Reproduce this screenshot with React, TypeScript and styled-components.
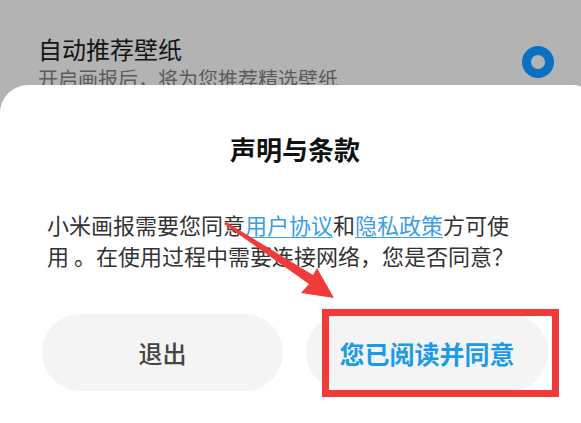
import React from 'react'
import styled, { createGlobalStyle } from 'styled-components'

const GlobalStyle = createGlobalStyle`
  html, body {
    margin: 0;
    padding: 0;
    background: #ffffff;
  }
  body {
    font-family: 'Noto Sans CJK SC', 'Noto Sans', sans-serif;
  }
`

const Screen = styled.main`
  position: relative;
  width: 581px;
  height: 423px;
  overflow: hidden;
  background: #b3b3b3;
`

const SettingRow = styled.section`
  display: flex;
  align-items: flex-start;
  justify-content: space-between;
  height: 85px;
  padding: 0 27px 0 38px;
  box-sizing: border-box;
  overflow: hidden;
`

const SettingText = styled.div`
  display: flex;
  flex-direction: column;
  padding-top: 33px;
`

const SettingTitle = styled.h2`
  margin: 0;
  font-size: 24px;
  line-height: 32px;
  font-weight: 400;
  color: #141414;
`

const SettingDesc = styled.p`
  margin: 0;
  font-size: 20px;
  line-height: 28px;
  color: #5c5c5c;
`

const Toggle = styled.span`
  width: 32px;
  height: 32px;
  margin-top: 46px;
  box-sizing: border-box;
  border: 9px solid #0a71c2;
  border-radius: 50%;
`

const Sheet = styled.section`
  width: 600px;
  height: 338px;
  padding: 46px 0 0 42px;
  box-sizing: border-box;
  background: #ffffff;
  border-radius: 28px 28px 0 0;
`

const Content = styled.div`
  width: 506px;
  display: flex;
  flex-direction: column;
`

const Title = styled.h1`
  margin: 0;
  text-align: center;
  font-size: 26px;
  line-height: 36px;
  font-weight: 700;
  color: #111111;
`

const Body = styled.p`
  margin: 42px 0 0;
  padding: 0 30px 0 5px;
  font-size: 22px;
  line-height: 31px;
  color: #333333;
`

const Link = styled.a`
  color: #3b9ee3;
  text-decoration: underline;
  text-underline-offset: 3px;
  text-decoration-thickness: 1px;
`

const Actions = styled.div`
  display: grid;
  grid-template-columns: 241px 242px;
  gap: 23px;
  margin-top: 43px;
`

const Pill = styled.button<{ $primary?: boolean }>`
  height: 77px;
  border: none;
  border-radius: 39px;
  background: #f4f4f4;
  font-family: inherit;
  font-size: ${p => (p.$primary ? '25px' : '24px')};
  font-weight: ${p => (p.$primary ? 700 : 500)};
  color: ${p => (p.$primary ? '#1b9ae6' : '#444444')};
  padding: 0;
`

const Highlight = styled.div`
  position: relative;
`

const RedBox = styled.span`
  position: absolute;
  left: 16px;
  right: -11px;
  top: -5px;
  bottom: -6px;
  border: 7px solid #f23a3a;
  pointer-events: none;
`

const ArrowLayer = styled.svg`
  position: absolute;
  left: 0;
  top: 0;
  pointer-events: none;
`

export default function App() {
  return (
    <>
      <GlobalStyle />
      <Screen>
        <SettingRow>
          <SettingText>
            <SettingTitle>自动推荐壁纸</SettingTitle>
            <SettingDesc>开启画报后，将为您推荐精选壁纸</SettingDesc>
          </SettingText>
          <Toggle />
        </SettingRow>
        <Sheet>
          <Content>
            <Title>声明与条款</Title>
            <Body>
              小米画报需要您同意<Link>用户协议</Link>和<Link>隐私政策</Link>方可使用 。在使用过程中需要连接网络，您是否同意？
            </Body>
            <Actions>
              <Pill>退出</Pill>
              <Highlight>
                <Pill $primary style={{ width: '100%' }}>您已阅读并同意</Pill>
                <RedBox />
              </Highlight>
            </Actions>
          </Content>
        </Sheet>
        <ArrowLayer width="581" height="423" viewBox="0 0 581 423">
          <polygon
            points="224,224 226,222 313,275 317,268 334,298 301,293 309,284"
            fill="#f23a3a"
          />
        </ArrowLayer>
      </Screen>
    </>
  )
}
